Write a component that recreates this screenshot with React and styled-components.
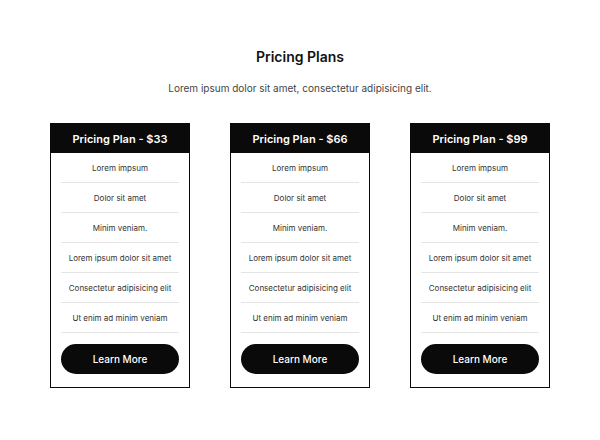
import React from 'react';
import styled, {createGlobalStyle} from 'styled-components';

const GlobalStyle = createGlobalStyle`
  body {
    margin: 0;
    background: #fff;
    font-family: Inter, "Noto Sans", sans-serif;
  }
`;

const plans = [
    {price: 33},
    {price: 66},
    {price: 99},
];

const features = [
    'Lorem impsum',
    'Dolor sit amet',
    'Minim veniam.',
    'Lorem ipsum dolor sit amet',
    'Consectetur adipisicing elit',
    'Ut enim ad minim veniam',
];

const App = () => {
    return (
        <>
            <GlobalStyle/>
            <Page>
                <Title>Pricing Plans</Title>
                <Subtitle>Lorem ipsum dolor sit amet, consectetur adipisicing elit.</Subtitle>
                <Cards>
                    {plans.map((plan) => (
                        <Card key={plan.price}>
                            <CardHeader>Pricing Plan - ${plan.price}</CardHeader>
                            <FeatureList>
                                {features.map((f) => (
                                    <Feature key={f}>{f}</Feature>
                                ))}
                            </FeatureList>
                            <Button>Learn More</Button>
                        </Card>
                    ))}
                </Cards>
            </Page>
        </>
    );
};

const Page = styled.div`
  width: 600px;
  padding-top: 48px;
  display: flex;
  flex-direction: column;
  align-items: center;
`;

const Title = styled.h1`
  margin: 0;
  font-size: 14px;
  line-height: 18px;
  font-weight: 600;
  color: #111;
`;

const Subtitle = styled.p`
  margin: 15px 0 0;
  font-size: 10px;
  line-height: 14px;
  color: #444;
`;

const Cards = styled.div`
  margin-top: 28px;
  display: flex;
  gap: 40px;
`;

const Card = styled.div`
  width: 140px;
  box-sizing: border-box;
  border: 1px solid #0a0a0a;
  padding: 0 10px 13px;
  display: flex;
  flex-direction: column;
`;

const CardHeader = styled.div`
  margin: 0 -10px;
  height: 29px;
  background: #0a0a0a;
  color: #fff;
  font-size: 11px;
  font-weight: 600;
  display: flex;
  align-items: center;
  justify-content: center;
`;

const FeatureList = styled.ul`
  list-style: none;
  margin: 0;
  padding: 0;
`;

const Feature = styled.li`
  height: 29px;
  border-bottom: 1px solid #e4e4e4;
  display: flex;
  align-items: center;
  justify-content: center;
  font-size: 8px;
  color: #333;
`;

const Button = styled.button`
  margin-top: 11px;
  height: 30px;
  border: none;
  border-radius: 15px;
  background: #0a0a0a;
  color: #fff;
  font-family: Inter, "Noto Sans", sans-serif;
  font-size: 10px;
  font-weight: 500;
  cursor: pointer;
`;

export default App;
